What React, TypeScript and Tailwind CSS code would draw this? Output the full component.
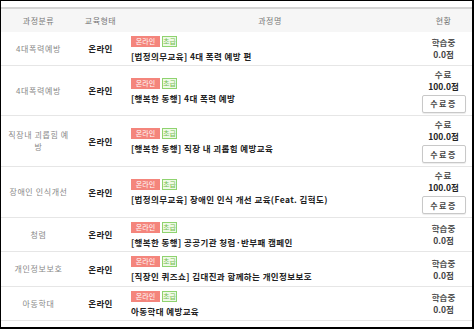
import React from "react";

type Course = {
  category: string;
  title: string;
  done: boolean;
  h: string;
};

const courses: Course[] = [
  { category: "4대폭력예방", title: "[법정의무교육] 4대 폭력 예방 편", done: false, h: "h-[34px]" },
  { category: "4대폭력예방", title: "[행복한 동행] 4대 폭력 예방", done: true, h: "h-[50px]" },
  { category: "직장내 괴롭힘 예방", title: "[행복한 동행] 직장 내 괴롭힘 예방교육", done: true, h: "h-[51px]" },
  { category: "장애인 인식개선", title: "[법정의무교육] 장애인 인식 개선 교육(Feat. 김혁도)", done: true, h: "h-[51px]" },
  { category: "청렴", title: "[행복한 동행] 공공기관 청렴·반부패 캠페인", done: false, h: "h-[34px]" },
  { category: "개인정보보호", title: "[직장인 퀴즈쇼] 김대진과 함께하는 개인정보보호", done: false, h: "h-[35px]" },
  { category: "아동학대", title: "아동학대 예방교육", done: false, h: "h-[34px]" },
];

const cols = "grid grid-cols-[75px_49px_290px_1fr]";

function Badges() {
  return (
    <div className="flex gap-[2px] mb-[4px]">
      <span className="h-[11px] w-[29px] bg-[#f4857c] text-white text-[7px] leading-[11px] text-center">
        온라인
      </span>
      <span className="h-[11px] w-[15px] border border-[#8fd36f] bg-[#eef9e6] text-[#74c052] text-[7px] leading-[9px] text-center">
        초급
      </span>
    </div>
  );
}

export default function App() {
  return (
    <div
      className="w-[474px] h-[329px] bg-white border-l border-t border-r-2 border-b-2 border-black pt-[6px]"
      style={{ fontFamily: '"Noto Sans CJK KR", "Noto Sans", sans-serif' }}
    >
      {/* header */}
      <div className={`${cols} h-[25px] border-t-2 border-[#d4d4d4] bg-[#f6f6f6] text-[8px] text-[#777] tracking-[0.5px] items-center text-center`}>
        <div>과정분류</div>
        <div>교육형태</div>
        <div>과정명</div>
        <div>현황</div>
      </div>

      {courses.map((c, i) => (
        <div key={i} className={`${cols} ${c.h} border-b border-[#e6e6e6] items-center`}>
          <div className="px-[6px] text-center text-[8px] leading-[12px] text-[#888] tracking-[0.6px]">
            {c.category}
          </div>
          <div className="text-center text-[8.5px] font-bold text-[#222] tracking-[0.3px]">온라인</div>
          <div className="pl-[6px]">
            <Badges />
            <div className="text-[8.5px] font-bold text-[#222] leading-[11px] tracking-[0.4px] whitespace-nowrap">
              {c.title}
            </div>
          </div>
          <div className="flex flex-col items-center text-[8.5px] font-bold text-[#333] leading-[11px]">
            {c.done ? (
              <>
                <div className="font-semibold text-[#555] tracking-[1px]">수료</div>
                <div className="mt-[1px] text-[#222]">100.0점</div>
                <button className="mt-[3px] w-[44px] h-[18px] border border-[#c8c8c8] rounded-[2px] bg-white text-[8px] font-semibold text-[#444] tracking-[1.5px] shadow-[0_1px_1px_rgba(0,0,0,0.08)]">
                  수료증
                </button>
              </>
            ) : (
              <>
                <div className="font-semibold text-[#555]">학습중</div>
                <div className="mt-[1px] font-semibold text-[#444]">0.0점</div>
              </>
            )}
          </div>
        </div>
      ))}
    </div>
  );
}
